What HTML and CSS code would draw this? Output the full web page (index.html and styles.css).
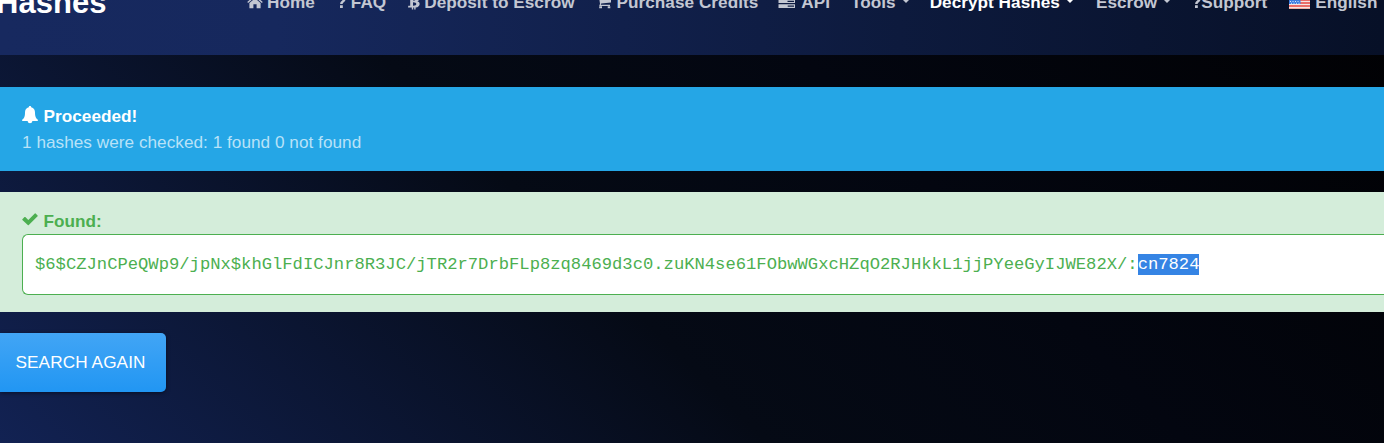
FILE: index.html
```html
<!DOCTYPE html>
<html lang="en">
<head>
<meta charset="utf-8">
<title>Hashes</title>
<link rel="stylesheet" href="styles.css">
</head>
<body>
<header class="header">
  <a class="brand">Hashes</a>
  <nav class="nav">
    <a class="link home"><svg class="icon" width="16" height="16" viewBox="0 0 16 16"><path d="M8 1.3 15.8 8l-.9 1L8 3.2 1.1 9l-.9-1zM11.7 2h2v3.6l-2-1.7zM2.4 9 8 4.3 13.6 9v5.2H9.6v-4H6.4v4h-4z"/></svg><span>Home</span></a>
    <a class="link faq"><svg class="icon" width="10" height="16" viewBox="0 0 10 16"><path d="M.5 4.8C1 2.8 2.3 1.8 4.6 1.8c2.4 0 4 1.4 4 3.4 0 2.7-3 3-3 4.9H3.1c0-3 2.7-3.3 2.7-4.7 0-1.5-2.4-1.7-3.1.6zM3 11.3h2.8V14H3z"/></svg><span>FAQ</span></a>
    <a class="link deposit"><svg class="icon" width="12" height="18" viewBox="0 0 12 18"><path fill-rule="evenodd" d="M0 3h3.8V1h1.4v2h1V1h1.4v2.1c4 .6 4.5 4.4 1.8 5.2 3.5.8 2.9 5.8-1.8 6.2v2.1H6.2v-2h-1v2H3.8v-2H0l.3-1.8h1.9V4.8H0zM5 4.8v2.8c3.6.2 3.8-2.7 0-2.8M5 9.2v3.5c4.5.2 4.5-3.5 0-3.5"/></svg><span>Deposit to Escrow</span></a>
    <a class="link cart"><svg class="icon" width="15" height="16" viewBox="0 0 15 16"><path d="M0 2h3l.4 1.2H14v5.2L4.200 9.500l-.4 1.300H13V12H2.200L3 9.700 2 3.300H0z"/><path d="M2.200 12.200h2.800v2H2.200zM10.700 12.200h2.600v2h-2.600z"/></svg><span>Purchase Credits</span></a>
    <a class="link api"><svg class="icon" width="18" height="16" viewBox="0 0 18 16"><path fill-rule="evenodd" d="M.5 1h16.5v3.4H.5zM.5 5.6H17V9H.5zM9.5 6.7v1.200H16V6.700zM.5 10.300H17v3.600H.5zM9.700 11.500v1.200H16v-1.200z"/></svg><span>API</span></a>
    <a class="link tools"><span>Tools</span><i class="caret"></i></a>
    <a class="link decrypt active"><span>Decrypt Hashes</span><i class="caret"></i></a>
    <a class="link"><span>Escrow</span><i class="caret"></i></a>
    <a class="link support"><svg class="icon" width="9" height="16" viewBox="0 0 9 16"><path d="M.5 4.8C1 2.8 2.3 1.8 4.6 1.8c2.4 0 4 1.4 4 3.4 0 2.7-3 3-3 4.9H3.1c0-3 2.7-3.3 2.7-4.7 0-1.5-2.4-1.7-3.1.6zM3 11.3h2.8V14H3z"/></svg><span>Support</span></a>
    <a class="link lang"><svg class="icon" width="21" height="16" viewBox="0 0 21 16"><path fill="#f5e4e2" d="M0 0h21v15H0z"/><path stroke="#e8453f" stroke-width="1.4" d="M0 3h21M0 6h21M0 9h21M0 12h21"/><path fill="#ecaea2" d="M0 14h21v1H0z"/><path fill="#3c7de0" d="M0 0h11.500v10H0z"/><path stroke="#d8e6fa" stroke-dasharray="1 1.500" d="M1 7.500h10M2 9.300h9"/></svg><span>English</span><i class="caret"></i></a>
  </nav>
</header>
<main class="page">
  <section class="alert info">
    <div class="title"><svg class="icon" width="16" height="18" viewBox="0 0 16 18"><path d="M8 0c.8 0 1.2.5 1.2 1.3C12 1.9 13 4 13 6.6c0 4.3 1 6 3 7.3 0 .7-.4 1.1-1 1.1h-4.7c0 3-4.6 3-4.6 0H1c-.6 0-1-.4-1-1.1 2-1.3 3-3 3-7.3 0-2.6 1-4.7 3.8-5.300C6.800.5 7.200 0 8 0z"/></svg><span>Proceeded!</span></div>
    <div class="detail">1 hashes were checked: 1 found 0 not found</div>
  </section>
  <section class="alert success">
    <div class="title"><svg class="icon" width="16" height="18" viewBox="0 0 16 18"><path d="M.4 8.200 2.500 6.100q.4-.4.8 0l3 3L12.800 2.500q.4-.4.8 0l2 2q.4.4 0 .8l-8.800 8.800q-.5.4-1 0L.4 9q-.4-.4 0-.8z"/></svg><span>Found:</span></div>
    <div class="result">$6$CZJnCPeQWp9/jpNx$khGlFdICJnr8R3JC/jTR2r7DrbFLp8zq8469d3c0.zuKN4se61FObwWGxcHZqO2RJHkkL1jjPYeeGyIJWE82X/:<span class="selected">cn7824</span></div>
  </section>
  <button class="button">SEARCH AGAIN</button>
</main>
</body>
</html>
```
FILE: styles.css
```css
* { box-sizing: border-box; }
body {
  margin: 0;
  height: 443px;
  overflow: hidden;
  font: 17.18px/26px "Liberation Sans", Arial, sans-serif;
  letter-spacing: .03px;
  color: #fff;
  background: linear-gradient(45deg, #122253 0%, #050a15 42%, #030610 65%, #010103 100%);
}
.header {
  display: flex;
  height: 115px;
  margin-top: -60px;
  padding-top: 49px;
  background: linear-gradient(90deg, #17295f 0, #16285d 20%, #11204b 45%, #0d1a3d 65%, #071027 100%);
}
.brand {
  flex: 0 0 247px;
  margin: 1px 4px 0 -4px;
  font-size: 31px;
  font-weight: bold;
}
.nav { display: flex; flex: none; gap: 22px; font-weight: bold; color: #c3c7d2; }
.link { display: flex; flex: none; height: 26px; align-items: center; white-space: nowrap; }
.link .icon { margin: -1px 4px 0 0; }
.link.cart .icon, .link.api .icon, .link.lang .icon { margin-right: 5px; }
.link.support .icon { margin-right: 0; }
.api, .decrypt { margin-left: -2px; }
.tools, .support { margin-left: -1px; }
.active { color: #fff; }
.icon { flex: none; fill: currentColor; }
.caret { margin: -2px 0 0 6px; border: 4px solid transparent; border-top-color: currentColor; border-bottom: 0; }
.page { padding-top: 32px; }
.alert { padding: 16px 0 0 22px; margin-bottom: 21px; }
.info { height: 84px; background: #25a6e6; }
.success { height: 120px; background: #d4edda; color: #4caf50; }
.title { display: flex; gap: 5.5px; height: 26px; font-weight: bold; }
.title .icon { margin-top: 3px; }
.detail { color: #b8e2f8; }
.result {
  height: 61px;
  padding: 0 12px;
  border: 1px solid #4caf50;
  border-right: 0;
  border-radius: 6px 0 0 6px;
  background: #fff;
  font: 17.18px/59px "Liberation Mono", monospace;
  letter-spacing: 0;
  white-space: nowrap;
}
.selected { padding: 1px 0; background: #3584e4; color: #fff; }
.button {
  display: block;
  width: 166px;
  height: 59px;
  padding: 0 0 2px 15.5px;
  border: 0;
  border-radius: 0 5px 5px 0;
  background: linear-gradient(#42a5f5, #2196f3);
  box-shadow: 0 1px 4px rgba(0, 0, 0, .5);
  color: #fff;
  font: inherit;
  letter-spacing: .1px;
  text-align: left;
}
```
